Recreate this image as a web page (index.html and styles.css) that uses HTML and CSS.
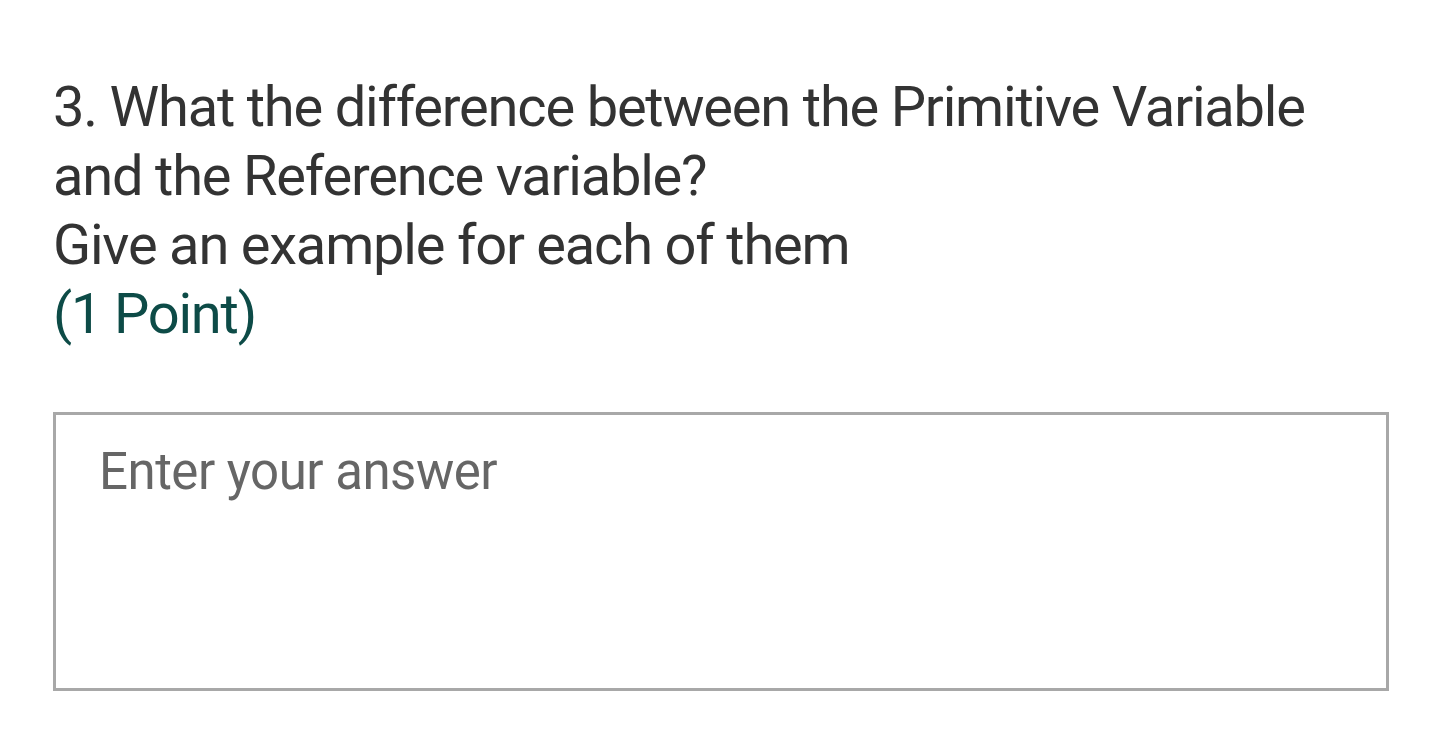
FILE: index.html
```html
<!DOCTYPE html>
<html lang="en">
<head>
<meta charset="utf-8">
<title>Question 3</title>
<link rel="stylesheet" href="styles.css">
</head>
<body>
<main class="question">
  <div class="question-title">
    <span class="line">3. What the difference between the Primitive Variable</span>
    <span class="line">and the Reference variable?</span>
    <span class="line">Give an example for each of them</span>
  </div>
  <div class="points">(1 Point)</div>
  <div class="answer-box">
    <div class="placeholder">Enter your answer</div>
  </div>
</main>
</body>
</html>
```

FILE: styles.css
```css
html, body {
  margin: 0;
  padding: 0;
  background: #ffffff;
}

body {
  font-family: Roboto, "Liberation Sans", sans-serif;
  width: 1440px;
  height: 740px;
  overflow: hidden;
}

.question {
  padding: 73px 51px 0 53px;
}

.question-title {
  color: #333333;
  font-size: 56px;
  line-height: 69px;
  letter-spacing: -1.2px;
}

.question-title .line {
  display: block;
  white-space: nowrap;
}

.points {
  color: #0d4b47;
  font-size: 56px;
  line-height: 69px;
  letter-spacing: -1.2px;
}

.answer-box {
  box-sizing: border-box;
  margin-top: 63px;
  height: 279px;
  border: 3px solid #a8a8a8;
  padding: 27px 40px 0 43px;
}

.placeholder {
  color: #666666;
  font-size: 51px;
  line-height: 60px;
  letter-spacing: -0.5px;
}
```
